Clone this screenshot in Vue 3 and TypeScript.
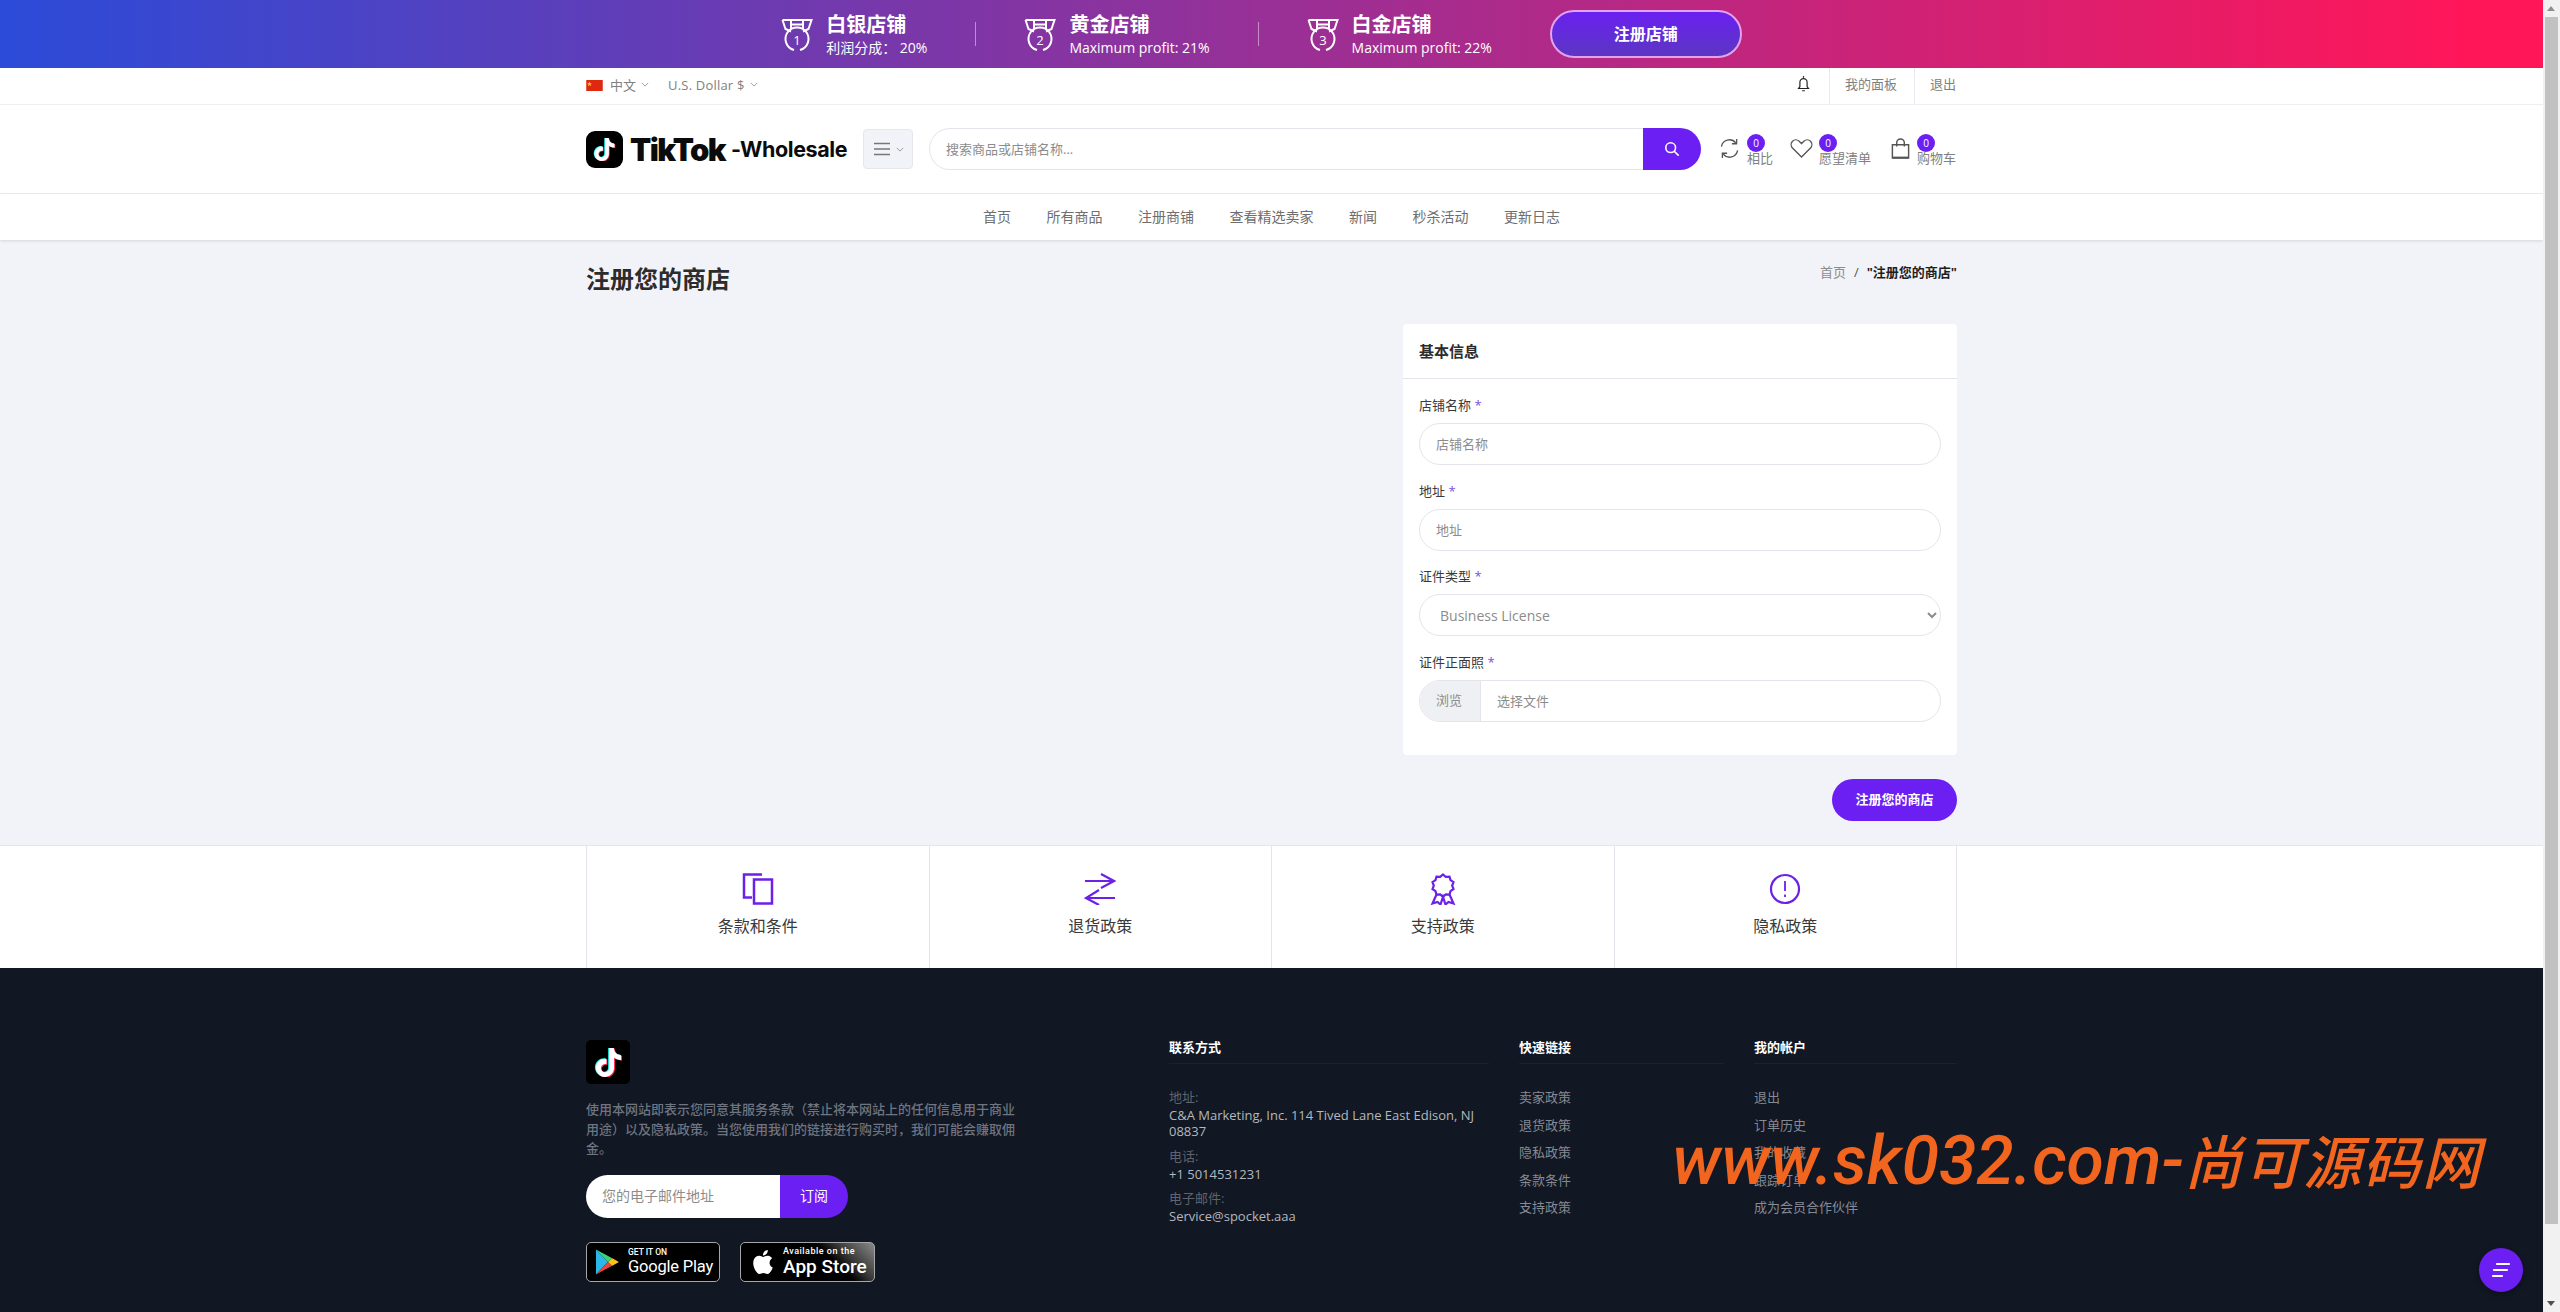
<script setup lang="ts">
const tiktokPath =
  'M12.525.02c1.31-.02 2.61-.01 3.91-.02.08 1.53.63 3.09 1.75 4.17 1.12 1.11 2.7 1.62 4.24 1.79v4.03c-1.44-.05-2.89-.35-4.2-.97-.57-.26-1.1-.59-1.62-.93-.01 2.92.01 5.84-.02 8.75-.08 1.4-.54 2.79-1.35 3.94-1.31 1.92-3.58 3.17-5.91 3.21-1.43.08-2.86-.31-4.08-1.03-2.02-1.19-3.44-3.37-3.65-5.71-.02-.5-.03-1-.01-1.49.18-1.9 1.12-3.72 2.58-4.96 1.66-1.44 3.98-2.13 6.15-1.72.02 1.48-.04 2.96-.04 4.44-.99-.32-2.15-.23-3.02.37-.63.41-1.11 1.04-1.36 1.75-.21.51-.15 1.07-.14 1.61.24 1.64 1.82 3.02 3.5 2.87 1.12-.01 2.19-.66 2.77-1.61.19-.33.4-.67.41-1.06.1-1.79.06-3.57.07-5.36.01-4.03-.01-8.05.02-12.07z'

const applePath =
  'M12.152 6.896c-.948 0-2.415-1.078-3.96-1.04-2.04.027-3.91 1.183-4.961 3.014-2.117 3.675-.546 9.103 1.519 12.09 1.013 1.454 2.208 3.09 3.792 3.039 1.52-.065 2.09-.987 3.935-.987 1.831 0 2.35.987 3.96.948 1.637-.026 2.676-1.48 3.676-2.948 1.156-1.688 1.636-3.325 1.675-3.415-.039-.013-3.182-1.221-3.22-4.857-.026-3.04 2.48-4.494 2.597-4.559-1.429-2.09-3.623-2.324-4.39-2.376-2-.156-3.675 1.09-4.61 1.09zM15.53 3.83c.843-1.012 1.4-2.427 1.245-3.83-1.207.052-2.662.805-3.532 1.818-.78.896-1.454 2.338-1.273 3.714 1.338.104 2.715-.688 3.559-1.701'

const tiers = [
  { n: 1, title: '白银店铺', sub: '利润分成： 20%' },
  { n: 2, title: '黄金店铺', sub: 'Maximum profit: 21%' },
  { n: 3, title: '白金店铺', sub: 'Maximum profit: 22%' },
]

const navItems = ['首页', '所有商品', '注册商铺', '查看精选卖家', '新闻', '秒杀活动', '更新日志']
const quickLinks = ['卖家政策', '退货政策', '隐私政策', '条款条件', '支持政策']
const accountLinks = ['退出', '订单历史', '我的收藏', '跟踪订单', '成为会员合作伙伴']
</script>

<template>
  <div class="page">
    <div class="promo">
      <template v-for="(t, i) in tiers" :key="t.n">
        <div class="tier">
          <svg class="medal" viewBox="0 0 32 33" fill="none" stroke="#fff" stroke-width="2">
            <path d="M1.5 1.5h29l-3 9-5.500 2.500M1.500 1.500l3 9 5.500 2.500M10 2v8.500M22 2v8.500M10 6h12" />
            <path d="M13 31.500A11.500 11.500 0 1 1 19 31.500" />
            <text x="16" y="26" text-anchor="middle" class="medal-num">{{ t.n }}</text>
          </svg>
          <div>
            <div class="tier-title">{{ t.title }}</div>
            <div class="tier-sub">{{ t.sub }}</div>
          </div>
        </div>
        <span v-if="i < 2" class="tier-sep"></span>
      </template>
      <button class="promo-btn">注册店铺</button>
    </div>

    <div class="topbar">
      <div class="wrap topbar-in">
        <div class="top-left">
          <svg class="flag" viewBox="0 0 18 12">
            <rect width="18" height="12" fill="#de2910" />
            <path d="M3.500 1.500l.7 2h2l-1.600 1.200.6 2-1.700-1.200-1.700 1.200.6-2L.8 3.500h2z" fill="#ffde00" />
          </svg>
          <span>中文</span>
          <svg class="caret" viewBox="0 0 10 6"><path d="M1 1l4 4 4-4" /></svg>
          <span class="currency">U.S. Dollar $</span>
          <svg class="caret" viewBox="0 0 10 6"><path d="M1 1l4 4 4-4" /></svg>
        </div>
        <div class="top-right">
          <svg class="bell" viewBox="0 0 14 20" fill="none" stroke="#222" stroke-width="1.300">
            <path d="M7 1v2M3 13V8a4 4 0 0 1 8 0v5l1.500 2h-11zM5.500 17.500h3" />
          </svg>
          <a class="top-link">我的面板</a>
          <a class="top-link">退出</a>
        </div>
      </div>
    </div>

    <header class="header">
      <div class="wrap header-in">
        <div class="logo">
          <span class="logo-badge">
            <svg viewBox="0 0 24 24" class="logo-note">
              <path :d="tiktokPath" fill="#25f4ee" transform="translate(-.8 -.5)" />
              <path :d="tiktokPath" fill="#fe2c55" transform="translate(.8 .5)" />
              <path :d="tiktokPath" fill="#fff" />
            </svg>
          </span>
          <span class="logo-tt">TikTok</span>
          <span class="logo-ws">-Wholesale</span>
        </div>
        <button class="cat-btn">
          <svg class="burger" viewBox="0 0 18 14" fill="none" stroke="#777" stroke-width="1.300">
            <path d="M1 1.500h16M1 7h16M1 12.500h16" />
          </svg>
          <svg class="caret" viewBox="0 0 10 6"><path d="M1 1l4 4 4-4" /></svg>
        </button>
        <div class="search">
          <input class="search-input" placeholder="搜索商品或店铺名称..." />
          <button class="search-btn">
            <svg viewBox="0 0 18 18" fill="none" stroke="#fff" stroke-width="1.800">
              <circle cx="7.500" cy="7.500" r="5.500" />
              <path d="M11.500 11.500l5 5" />
            </svg>
          </button>
        </div>
        <div class="actions">
          <div class="action action-compare">
            <svg class="act-icon" viewBox="0 0 20 22" fill="none" stroke="#555" stroke-width="1.400">
              <path d="M1.500 9A8.500 8.500 0 0 1 16.500 5M18.500 13A8.500 8.500 0 0 1 3.500 17" />
              <path d="M17.500 1v5h-5M2.500 21v-5h5" />
            </svg>
            <div class="act-col">
              <span class="count">0</span>
              <span class="act-label">相比</span>
            </div>
          </div>
          <div class="action action-wish">
            <svg class="act-icon heart" viewBox="0 0 24 20" fill="none" stroke="#555" stroke-width="1.400">
              <path d="M12 19L2.500 9.500a5.300 5.300 0 0 1 0-7.200 5 5 0 0 1 7 0L12 4.800l2.500-2.500a5 5 0 0 1 7 0 5.300 5.300 0 0 1 0 7.200z" />
            </svg>
            <div class="act-col">
              <span class="count">0</span>
              <span class="act-label">愿望清单</span>
            </div>
          </div>
          <div class="action action-bag">
            <svg class="act-icon bag" viewBox="0 0 19 22" fill="none" stroke="#555" stroke-width="1.500">
              <path d="M1 7h17v14H1zM5.500 9V5a4 4 0 0 1 8 0v4" />
              <path d="M1 20.500h17" stroke-width="2" />
            </svg>
            <div class="act-col">
              <span class="count">0</span>
              <span class="act-label">购物车</span>
            </div>
          </div>
        </div>
      </div>
    </header>

    <nav class="nav">
      <a v-for="item in navItems" :key="item" class="nav-item">{{ item }}</a>
    </nav>

    <main class="main">
      <div class="wrap">
        <div class="page-head">
          <h1 class="page-title">注册您的商店</h1>
          <div class="crumbs">
            <span class="crumb-home">首页</span>
            <span class="crumb-sep">/</span>
            <b>"注册您的商店"</b>
          </div>
        </div>
        <div class="form-col">
          <section class="card">
            <h2 class="card-head">基本信息</h2>
            <div class="card-body">
              <div class="field">
                <label class="label">店铺名称 <i>*</i></label>
                <input class="control" placeholder="店铺名称" />
              </div>
              <div class="field">
                <label class="label">地址 <i>*</i></label>
                <input class="control" placeholder="地址" />
              </div>
              <div class="field">
                <label class="label">证件类型 <i>*</i></label>
                <select class="control control-select">
                  <option>Business License</option>
                </select>
              </div>
              <div class="field">
                <label class="label">证件正面照 <i>*</i></label>
                <div class="file">
                  <span class="file-btn">浏览</span>
                  <span class="file-name">选择文件</span>
                </div>
              </div>
            </div>
          </section>
          <div class="submit-row">
            <button class="submit">注册您的商店</button>
          </div>
        </div>
      </div>
    </main>

    <section class="services">
      <div class="wrap services-grid">
        <div class="service">
          <svg class="svc-icon" viewBox="0 0 32 32" fill="none" stroke="#6b21e8" stroke-width="2.500">
            <path d="M20 1.500H2v23h8" />
            <path d="M12 6.500h18v24H12z" />
          </svg>
          <span>条款和条件</span>
        </div>
        <div class="service">
          <svg class="svc-icon" viewBox="0 0 32 32" fill="none" stroke="#6b21e8" stroke-width="2.200">
            <path d="M1 8h28M17 1l13 7-13 7" stroke-linejoin="miter" />
            <path d="M31 25H3M15 17L2 25l13 7" stroke-linejoin="miter" />
          </svg>
          <span>退货政策</span>
        </div>
        <div class="service">
          <svg class="svc-icon" viewBox="0 0 32 32" fill="none" stroke="#6b21e8" stroke-width="2.200">
            <path d="M16 1.500l2.800 2.400 3.700-.3 1 3.500 3 2.100-1.300 3.400 1.300 3.400-3 2.100-1 3.500-3.700-.3-2.800 2.400-2.800-2.400-3.700.3-1-3.500-3-2.100 1.300-3.400-1.300-3.400 3-2.100 1-3.500 3.700.3z" />
            <path d="M9.500 21.500L5.500 30.500l5-1.500 3 2.500 2.500-7.500 2.500 7.500 3-2.500 5 1.500-4-9" />
          </svg>
          <span>支持政策</span>
        </div>
        <div class="service">
          <svg class="svc-icon" viewBox="0 0 32 32" fill="none" stroke="#6b21e8" stroke-width="2.200">
            <circle cx="16" cy="16" r="14" />
            <path d="M16 8v10M16 21.500v2.500" stroke-width="1.800" />
          </svg>
          <span>隐私政策</span>
        </div>
      </div>
    </section>

    <footer class="footer">
      <div class="wrap footer-grid">
        <div class="foot-about">
          <span class="foot-logo">
            <svg viewBox="0 0 24 24" class="foot-note">
              <path :d="tiktokPath" fill="#25f4ee" transform="translate(-.8 -.5)" />
              <path :d="tiktokPath" fill="#fe2c55" transform="translate(.8 .5)" />
              <path :d="tiktokPath" fill="#fff" />
            </svg>
          </span>
          <p class="foot-text">使用本网站即表示您同意其服务条款（禁止将本网站上的任何信息用于商业用途）以及隐私政策。当您使用我们的链接进行购买时，我们可能会赚取佣金。</p>
          <div class="subscribe">
            <input class="sub-input" placeholder="您的电子邮件地址" />
            <button class="sub-btn">订阅</button>
          </div>
          <div class="stores">
            <div class="store store-play">
              <svg class="play-icon" viewBox="0 0 24 26">
                <path d="M0 0l12.500 13L0 26z" fill="#2bb8e8" />
                <path d="M0 0l17 9.200-4.500 3.800z" fill="#3bd37a" />
                <path d="M0 26l17-9.200-4.500-3.800z" fill="#e8453c" />
                <path d="M17 9.200l7 3.800-7 3.800-4.500-3.800z" fill="#fcc419" />
              </svg>
              <div class="store-text">
                <div class="play-top">GET IT ON</div>
                <div class="play-name">Google Play</div>
              </div>
            </div>
            <div class="store store-apple">
              <svg class="apple-icon" viewBox="0 0 24 24"><path :d="applePath" fill="#fff" /></svg>
              <div class="store-text">
                <div class="apple-top">Available on the</div>
                <div class="apple-name">App Store</div>
              </div>
            </div>
          </div>
        </div>

        <div class="foot-col">
          <h4 class="foot-title">联系方式</h4>
          <div class="contact">
            <span class="c-label">地址:</span>
            <span class="c-value">C&amp;A Marketing, Inc. 114 Tived Lane East Edison, NJ 08837</span>
          </div>
          <div class="contact">
            <span class="c-label">电话:</span>
            <span class="c-value">+1 5014531231</span>
          </div>
          <div class="contact">
            <span class="c-label">电子邮件:</span>
            <span class="c-value">Service@spocket.aaa</span>
          </div>
        </div>

        <div class="foot-col">
          <h4 class="foot-title">快速链接</h4>
          <a v-for="l in quickLinks" :key="l" class="foot-link">{{ l }}</a>
        </div>

        <div class="foot-col">
          <h4 class="foot-title">我的帐户</h4>
          <a v-for="l in accountLinks" :key="l" class="foot-link">{{ l }}</a>
        </div>
      </div>
    </footer>

    <div class="watermark">www.sk032.com-<span class="wm-cn">尚可源码网</span></div>

    <button class="fab">
      <svg viewBox="0 0 20 16" fill="none" stroke="#fff" stroke-width="2.200" stroke-linecap="round">
        <path d="M6 2h12M3 8h13M2 14h9" />
      </svg>
    </button>
  </div>

  <div class="scrollbar">
    <span class="sb-up"></span>
    <span class="sb-thumb"></span>
    <span class="sb-down"></span>
  </div>
</template>

<style>
html,
body {
  margin: 0;
  height: 1312px;
  overflow: hidden;
}
</style>

<style scoped>
.page {
  position: relative;
  width: 2543px;
  height: 1312px;
  background: #fff;
  font-family: "Open Sans", "Noto Sans CJK SC", sans-serif;
  font-size: 13px;
  color: #333;
  overflow: hidden;
}

.wrap {
  width: 1371px;
  margin: 0 auto;
}

/* promo strip */
.promo {
  height: 68px;
  padding-right: 20px;
  box-sizing: border-box;
  display: flex;
  align-items: center;
  justify-content: center;
  background: linear-gradient(90deg, #2b4bd8, #ff1659 97%);
  color: #fff;
}

.tier {
  display: flex;
  align-items: center;
  gap: 13px;
  padding-top: 2px;
}

.medal {
  width: 32px;
  height: 34px;
}

.medal-num {
  font-size: 13px;
  fill: #fff;
  stroke: none;
}

.tier-title {
  font-size: 20px;
  font-weight: 700;
  line-height: 26px;
}

.tier-sub {
  font-size: 14px;
  line-height: 20px;
  white-space: pre;
}

.tier-sep {
  width: 1px;
  height: 24px;
  margin: 0 48px;
  background: rgba(255, 255, 255, 0.45);
}

.promo-btn {
  width: 192px;
  height: 48px;
  margin-left: 58px;
  padding: 0 0 2px;
  border: 2px solid #e3a2ec;
  border-radius: 24px;
  background: linear-gradient(180deg, #6a20f0, #5c36c2);
  color: #fff;
  font: 700 16px "Open Sans", "Noto Sans CJK SC", sans-serif;
}

/* top bar */
.topbar {
  height: 37px;
  box-sizing: border-box;
  border-bottom: 1px solid #eceef2;
  color: #808080;
}

.topbar-in {
  height: 36px;
  display: flex;
  justify-content: space-between;
}

.top-left,
.top-right {
  display: flex;
  align-items: center;
}

.top-left {
  padding-bottom: 3px;
}

.flag {
  width: 17px;
  height: 11px;
  margin: 1px 7px 0 0;
}

.caret {
  width: 8px;
  height: 5px;
  margin-left: 5px;
  fill: none;
  stroke: #888;
  stroke-width: 1;
}

.currency {
  margin-left: 19px;
  letter-spacing: 0.200px;
}

.bell {
  width: 13px;
  height: 18px;
  margin: -4px 19px 0 0;
}

.top-link {
  height: 36px;
  line-height: 33px;
  padding-left: 15px;
  padding-right: 17px;
  border-left: 1px solid #e8e9ee;
}

.top-link:last-child {
  padding-right: 1px;
}

/* header */
.header {
  height: 89px;
  box-sizing: border-box;
  border-bottom: 1px solid #eceef2;
}

.header-in {
  height: 88px;
  display: flex;
  align-items: center;
}

.logo {
  width: 277px;
  display: flex;
  align-items: center;
  color: #0b0b0b;
}

.logo-badge {
  width: 37px;
  height: 37px;
  display: flex;
  align-items: center;
  justify-content: center;
  border-radius: 9px;
  background: #000;
  margin-right: 7px;
}

.logo-note {
  width: 23px;
  height: 23px;
}

.logo-tt {
  font: 900 31px "Inter", sans-serif;
  letter-spacing: -1.600px;
}

.logo-ws {
  margin-left: 6px;
  font: 700 21.500px "Inter", sans-serif;
  letter-spacing: -0.400px;
}

.cat-btn {
  width: 50px;
  height: 40px;
  display: flex;
  align-items: center;
  justify-content: center;
  padding: 0;
  background: #f2f3f8;
  border: 1px solid #e6e7ed;
  border-radius: 4px;
}

.burger {
  width: 18px;
  height: 14px;
}

.search {
  width: 772px;
  height: 42px;
  margin-left: 16px;
  display: flex;
}

.search-input {
  flex: 1;
  min-width: 0;
  box-sizing: border-box;
  padding: 0 16px;
  border: 1px solid #e4e5ec;
  border-right: 0;
  border-radius: 21px 0 0 21px;
  font: 13px "Open Sans", "Noto Sans CJK SC", sans-serif;
  outline: 0;
}

.search-input::placeholder,
.control::placeholder {
  color: #8c8c8c;
}

.search-btn {
  width: 58px;
  padding: 0;
  border: 0;
  border-radius: 0 21px 21px 0;
  background: #6b1ff2;
  display: flex;
  align-items: center;
  justify-content: center;
}

.search-btn svg {
  width: 16px;
  height: 16px;
}

.actions {
  display: flex;
  align-items: center;
  margin-left: 19px;
}

.action {
  display: flex;
  align-items: center;
  gap: 8px;
}

.action-wish {
  margin-left: 17px;
  gap: 6px;
}

.action-bag {
  margin-left: 20px;
  gap: 7px;
}

.act-icon {
  width: 19px;
  height: 21px;
  margin-bottom: 2px;
}

.heart {
  width: 23px;
  height: 19px;
}

.act-col {
  display: flex;
  flex-direction: column;
  align-items: flex-start;
}

.count {
  width: 18px;
  height: 18px;
  border-radius: 50%;
  background: #6b1ff2;
  color: #fff;
  font-size: 10px;
  line-height: 18px;
  text-align: center;
}

.act-label {
  margin-top: -1px;
  line-height: 14px;
  color: #808080;
  white-space: nowrap;
}

/* nav */
.nav {
  position: relative;
  height: 46px;
  padding-bottom: 2px;
  box-sizing: border-box;
  display: flex;
  align-items: center;
  justify-content: center;
  gap: 35.500px;
  background: #fff;
  box-shadow: 0 1px 3px rgba(0, 0, 0, 0.12);
}

.nav-item {
  font-size: 14px;
  color: #6e6e6e;
}

/* main */
.main {
  height: 605px;
  background: #f2f3f8;
}

.page-head {
  height: 84px;
  display: flex;
  justify-content: space-between;
}

.page-title {
  margin: 24px 0 0;
  font-size: 24px;
  line-height: 30px;
  font-weight: 700;
  color: #2c2c2c;
}

.crumbs {
  margin-top: 22px;
  line-height: 20px;
  color: #1e1e1e;
}

.crumb-home {
  color: #8c8c8c;
}

.crumb-sep {
  margin: 0 8px;
  color: #555;
}

.form-col {
  width: 554px;
  margin-left: auto;
}

.card {
  background: #fff;
  border-radius: 4px;
}

.card-head {
  height: 55px;
  box-sizing: border-box;
  margin: 0;
  padding: 0 16px;
  border-bottom: 1px solid #e4e5ec;
  font-size: 15px;
  font-weight: 700;
  line-height: 54px;
  color: #2c2c2c;
}

.card-body {
  padding: 16px 16px 17px;
}

.field {
  margin-bottom: 15.700px;
}

.label {
  display: block;
  margin-bottom: 8px;
  line-height: 20px;
  color: #3a3a3a;
}

.label i {
  color: #7a4fe0;
  font-style: normal;
}

.control {
  display: block;
  width: 100%;
  height: 42px;
  box-sizing: border-box;
  padding: 0 16px;
  background: #fff;
  border: 1px solid #e4e5ec;
  border-radius: 21px;
  font: 13px "Open Sans", "Noto Sans CJK SC", sans-serif;
  outline: 0;
}

.control-select {
  padding-left: 16px;
  font-size: 14px;
  color: #8c8c8c;
}

.file {
  height: 42px;
  box-sizing: border-box;
  display: flex;
  align-items: center;
  border: 1px solid #e4e5ec;
  border-radius: 21px;
  overflow: hidden;
  color: #8c8c8c;
}

.file-btn {
  width: 61px;
  height: 100%;
  box-sizing: border-box;
  padding-left: 16px;
  line-height: 38px;
  background: #eef0f3;
  border-right: 1px solid #e4e5ec;
}

.file-name {
  margin: -2px 0 0 16px;
}

.submit-row {
  display: flex;
  justify-content: flex-end;
  margin-top: 24px;
}

.submit {
  width: 125px;
  height: 42px;
  padding: 0 0 2px;
  border: 0;
  border-radius: 21px;
  background: #6b1ff2;
  color: #fff;
  font: 700 13px "Open Sans", "Noto Sans CJK SC", sans-serif;
}

/* services */
.services {
  height: 123px;
  box-sizing: border-box;
  border-top: 1px solid #e4e5ec;
}

.services-grid {
  height: 122px;
  display: grid;
  grid-template-columns: repeat(4, 1fr);
  border-right: 1px solid #e4e5ec;
  box-sizing: border-box;
}

.service {
  display: flex;
  flex-direction: column;
  align-items: center;
  padding-top: 27px;
  border-left: 1px solid #e4e5ec;
  font-size: 16px;
  line-height: 24px;
  color: #3a3a3a;
}

.svc-icon {
  width: 32px;
  height: 32px;
  margin-bottom: 9px;
}

/* footer */
.footer {
  height: 344px;
  box-sizing: border-box;
  padding-top: 69px;
  background: #111723;
}

.footer-grid {
  display: grid;
  grid-template-columns: 553px 320px 205px 1fr;
  column-gap: 30px;
}

.foot-about {
  padding-top: 3px;
}

.foot-logo {
  width: 44px;
  height: 44px;
  display: flex;
  align-items: center;
  justify-content: center;
  background: #000;
  border-radius: 5px;
}

.foot-note {
  width: 29px;
  height: 29px;
}

.foot-text {
  width: 432px;
  margin: 16px 0;
  font-weight: 500;
  line-height: 19.500px;
  color: #6e7480;
}

.subscribe {
  width: 262px;
  height: 43px;
  display: flex;
}

.sub-input {
  width: 194px;
  box-sizing: border-box;
  padding: 0 16px 2px;
  border: 0;
  border-radius: 22px 0 0 22px;
  background: #fff;
  font: 14px "Open Sans", "Noto Sans CJK SC", sans-serif;
  outline: 0;
}

.sub-input::placeholder {
  color: #8c8c8c;
}

.sub-btn {
  width: 68px;
  padding: 0 0 2px;
  border: 0;
  border-radius: 0 22px 22px 0;
  background: #6b1ff2;
  color: #fff;
  font: 14px "Open Sans", "Noto Sans CJK SC", sans-serif;
}

.stores {
  display: flex;
  gap: 20px;
  margin-top: 24px;
}

.store {
  width: 134px;
  height: 40px;
  box-sizing: border-box;
  display: flex;
  align-items: center;
  border: 1px solid #a6a6a6;
  border-radius: 5px;
  background: #000;
  color: #fff;
}

.store-apple {
  width: 135px;
  background: linear-gradient(225deg, #8a8a8a 0, #3a3a3a 22%, #000 34%);
}

.store-text {
  white-space: nowrap;
}

.play-icon {
  width: 23px;
  height: 26px;
  margin: 0 9px 0 9px;
}

.play-top {
  font: 500 8.500px/10px "Roboto", sans-serif;
}

.play-name {
  font: 400 16.500px/20px "Roboto", sans-serif;
  letter-spacing: -0.200px;
}

.apple-icon {
  width: 24px;
  height: 26px;
  margin: 0 8px 0 10px;
}

.apple-top {
  font: 500 9px/10px "Roboto", sans-serif;
  letter-spacing: 0.500px;
}

.apple-name {
  font: 500 19px/21px "Roboto", sans-serif;
}

.foot-col {
  display: flex;
  flex-direction: column;
  align-items: flex-start;
}

.foot-title {
  width: 100%;
  height: 27px;
  box-sizing: border-box;
  margin: 0 0 24px;
  border-bottom: 1px solid #1a2130;
  font-size: 13px;
  font-weight: 700;
  line-height: 20px;
  color: #fff;
}

.contact {
  margin-bottom: 8.500px;
}

.c-label {
  display: block;
  line-height: 18px;
  color: #5f6570;
}

.c-value {
  display: block;
  margin-top: 1px;
  margin-bottom: -1px;
  line-height: 16px;
  color: #b4b7bd;
}

.foot-link {
  line-height: 18px;
  margin-bottom: 9.500px;
  color: #858a93;
}

/* overlays */
.watermark {
  position: absolute;
  left: 1672px;
  top: 1118px;
  font: italic 500 68px/86px "Roboto", "Noto Sans CJK SC", sans-serif;
  color: #f2651f;
  white-space: nowrap;
}

.wm-cn {
  font-size: 58px;
  letter-spacing: 1.500px;
}

.fab {
  position: absolute;
  left: 2479px;
  top: 1248px;
  width: 44px;
  height: 44px;
  padding: 12px;
  border: 0;
  border-radius: 50%;
  background: #6b1ff2;
  box-shadow: 0 2px 6px rgba(0, 0, 0, 0.3);
}

.fab svg {
  display: block;
  width: 20px;
  height: 20px;
}

.scrollbar {
  position: fixed;
  top: 0;
  right: 0;
  bottom: 0;
  width: 17px;
  background: #f1f1f1;
}

.sb-thumb {
  position: absolute;
  left: 2px;
  top: 17px;
  width: 13px;
  height: 1207px;
  background: #c1c1c1;
}

.sb-up,
.sb-down {
  position: absolute;
  left: 4px;
  width: 0;
  height: 0;
  border-left: 4.500px solid transparent;
  border-right: 4.500px solid transparent;
}

.sb-up {
  top: 6px;
  border-bottom: 5px solid #8f8f8f;
}

.sb-down {
  bottom: 6px;
  border-top: 5px solid #505050;
}
</style>
